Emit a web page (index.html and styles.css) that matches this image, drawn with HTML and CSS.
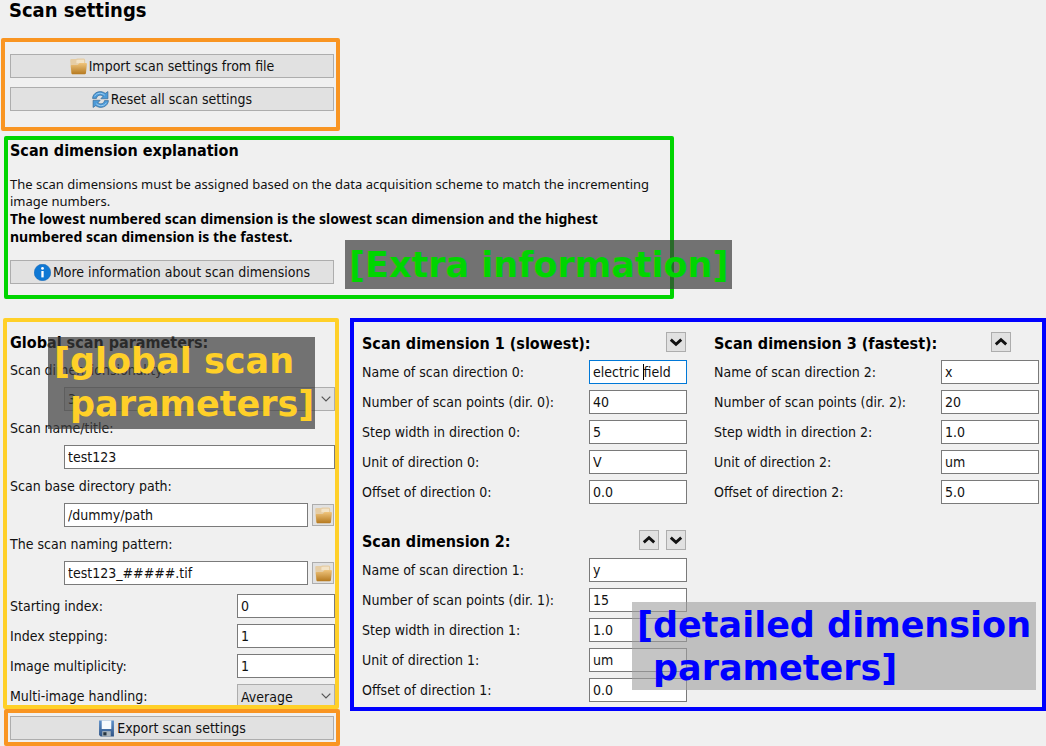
FILE: index.html
```html
<!DOCTYPE html>
<html lang="en">
<head>
<meta charset="utf-8">
<title>Scan settings</title>
<link rel="stylesheet" href="styles.css">
</head>
<body>
<svg class="defs" aria-hidden="true">
  <defs>
    <linearGradient id="folderFront" x1="0" y1="0" x2="0" y2="1"><stop offset="0" stop-color="#efc47c"/><stop offset="1" stop-color="#b5791f"/></linearGradient>
    <linearGradient id="floppy" x1="0" y1="0" x2="0" y2="1"><stop offset="0" stop-color="#5d8fc9"/><stop offset="1" stop-color="#2f5487"/></linearGradient>
    <symbol id="folder" viewBox="0 0 16 16">
      <path d="M0.200 2 Q0.200 1 1.200 1 H5.500 L7 0.500 H13 Q14.300 0.500 14.300 2 V9 L2 15.500 L1 14 Z" fill="#e6cda4"/>
      <path d="M6 2.200 L7.500 1.700 H13.200 V5 H6 Z" fill="#f3e3c6"/>
      <path d="M0.700 7.300 Q0.700 6.500 1.500 6.500 H7.300 L9 4.800 H15.200 Q16 4.800 15.900 5.800 L15 14.300 Q14.800 15.300 13.800 15.300 H2.500 Q1.500 15.300 1.400 14.300 Z" fill="url(#folderFront)"/>
    </symbol>
    <symbol id="reset" viewBox="0 0 16 16">
      <path d="M0.500 7 C0.800 1.500 7.500 -1.500 12.500 2.200 L15 0.500 V7.300 H8.300 L10.500 4.800 C7.500 2.900 4.800 4.200 4.200 7 Z" fill="#4b9ad8" stroke="#35658f" stroke-width="0.600"/>
      <path d="M15.500 9 C15.200 14.500 8.500 17.500 3.500 13.800 L1 15.500 V8.700 H7.700 L5.500 11.200 C8.500 13.100 11.200 11.800 11.800 9 Z" fill="#4b9ad8" stroke="#35658f" stroke-width="0.600"/>
      <path d="M2.500 5 C4.200 1.800 8.800 1.200 12 3.900 M13.500 11 C11.800 14.200 7.200 14.800 4 12.100" fill="none" stroke="#9fd0f3" stroke-width="0.900"/>
    </symbol>
    <symbol id="up" viewBox="0 0 19 19"><path d="M4 12 L9.500 7 L15 12" fill="none" stroke="#111" stroke-width="3"/></symbol>
    <symbol id="down" viewBox="0 0 19 19"><path d="M4 7 L9.500 12 L15 7" fill="none" stroke="#111" stroke-width="3"/></symbol>
    <symbol id="chevron" viewBox="0 0 10 6"><path d="M0.700 0.700 L5 5 L9.300 0.700" fill="none" stroke="#555" stroke-width="1.200"/></symbol>
  </defs>
</svg>
<main class="page">
  <h1 class="title">Scan settings</h1>

  <section class="frame frame-top">
    <button class="action" type="button"><svg class="icon"><use href="#folder"/></svg>Import scan settings from file</button>
    <button class="action" type="button"><svg class="icon"><use href="#reset"/></svg>Reset all scan settings</button>
  </section>

  <section class="frame frame-info">
    <h2 class="heading">Scan dimension explanation</h2>
    <p class="explanation">The scan dimensions must be assigned based on the data acquisition scheme to match the incrementing<br>image numbers.<br><strong>The lowest numbered scan dimension is the slowest scan dimension and the highest<br>numbered scan dimension is the fastest.</strong></p>
    <button class="action" type="button"><svg class="icon" viewBox="0 0 16 16"><circle cx="8" cy="8" r="7.800" fill="#0f78d4" stroke="#0b62b3" stroke-width="0.500"/><circle cx="8" cy="4.200" r="1.300" fill="#fff"/><path d="M8 6.600 V12.600" stroke="#fff" stroke-width="2.200"/></svg>More information about scan dimensions</button>
    <div class="tag tag-info">[Extra information]</div>
  </section>

  <div class="columns">
    <div class="left">
      <section class="frame frame-global">
        <h2 class="heading">Global scan parameters:</h2>
        <div class="stacked">
          <label for="dim">Scan dimensionsionality:</label>
          <div class="line"><span class="pick"><select id="dim" class="select"><option>3</option></select><svg class="chevron"><use href="#chevron"/></svg></span></div>
        </div>
        <div class="stacked">
          <label for="title">Scan name/title:</label>
          <div class="line"><input id="title" class="input" value="test123"></div>
        </div>
        <div class="stacked">
          <label for="path">Scan base directory path:</label>
          <div class="line"><input id="path" class="input" value="/dummy/path"><button class="browse" type="button" aria-label="Choose directory"><svg class="icon"><use href="#folder"/></svg></button></div>
        </div>
        <div class="stacked">
          <label for="pattern">The scan naming pattern:</label>
          <div class="line"><input id="pattern" class="input" value="test123_#####.tif"><button class="browse" type="button" aria-label="Choose file"><svg class="icon"><use href="#folder"/></svg></button></div>
        </div>
        <div class="rows">
          <div class="row"><label for="start">Starting index:</label><input id="start" class="input" value="0"></div>
          <div class="row"><label for="step">Index stepping:</label><input id="step" class="input" value="1"></div>
          <div class="row"><label for="mult">Image multiplicity:</label><input id="mult" class="input" value="1"></div>
          <div class="row row-cut"><label for="multi">Multi-image handling:</label><span class="pick"><select id="multi" class="select"><option>Average</option></select><svg class="chevron"><use href="#chevron"/></svg></span></div>
        </div>
        <div class="tag tag-global">[global scan<br><span class="tag-next">parameters]</span></div>
      </section>
      <section class="frame frame-export">
        <button class="action" type="button"><svg class="icon" viewBox="0 0 16 16"><path d="M1 0.500 H15 V15.500 H2.500 L1 14 Z" fill="url(#floppy)"/><path d="M3.500 0.500 H12.500 V8.500 H3.500 Z" fill="#f7fafd"/><path d="M4 10.500 H12 V15.500 H4 Z" fill="#a9b4bd"/><path d="M5 11.500 H8 V14.500 H5 Z" fill="#26343f"/></svg>Export scan settings</button>
      </section>
    </div>

    <section class="frame frame-dims">
      <div class="group">
        <div class="group-head"><h2 class="heading">Scan dimension 1 (slowest):</h2><button class="move" type="button" aria-label="Move down"><svg><use href="#down"/></svg></button></div>
        <div class="rows">
          <div class="row"><label for="n0">Name of scan direction 0:</label><span class="pick"><input id="n0" class="input active" value="electric field"><span class="caret"></span></span></div>
          <div class="row"><label for="p0">Number of scan points (dir. 0):</label><input id="p0" class="input" value="40"></div>
          <div class="row"><label for="s0">Step width in direction 0:</label><input id="s0" class="input" value="5"></div>
          <div class="row"><label for="u0">Unit of direction 0:</label><input id="u0" class="input" value="V"></div>
          <div class="row"><label for="o0">Offset of direction 0:</label><input id="o0" class="input" value="0.0"></div>
        </div>
      </div>
      <div class="group">
        <div class="group-head group-head-last"><h2 class="heading">Scan dimension 3 (fastest):</h2><button class="move" type="button" aria-label="Move up"><svg><use href="#up"/></svg></button></div>
        <div class="rows">
          <div class="row"><label for="n2">Name of scan direction 2:</label><input id="n2" class="input" value="x"></div>
          <div class="row"><label for="p2">Number of scan points (dir. 2):</label><input id="p2" class="input" value="20"></div>
          <div class="row"><label for="s2">Step width in direction 2:</label><input id="s2" class="input" value="1.0"></div>
          <div class="row"><label for="u2">Unit of direction 2:</label><input id="u2" class="input" value="um"></div>
          <div class="row"><label for="o2">Offset of direction 2:</label><input id="o2" class="input" value="5.0"></div>
        </div>
      </div>
      <div class="group">
        <div class="group-head"><h2 class="heading">Scan dimension 2:</h2><button class="move" type="button" aria-label="Move up"><svg><use href="#up"/></svg></button><button class="move" type="button" aria-label="Move down"><svg><use href="#down"/></svg></button></div>
        <div class="rows">
          <div class="row"><label for="n1">Name of scan direction 1:</label><input id="n1" class="input" value="y"></div>
          <div class="row"><label for="p1">Number of scan points (dir. 1):</label><input id="p1" class="input" value="15"></div>
          <div class="row"><label for="s1">Step width in direction 1:</label><input id="s1" class="input" value="1.0"></div>
          <div class="row"><label for="u1">Unit of direction 1:</label><input id="u1" class="input" value="um"></div>
          <div class="row"><label for="o1">Offset of direction 1:</label><input id="o1" class="input" value="0.0"></div>
        </div>
      </div>
      <div class="tag tag-dims">[detailed dimension<br><span class="tag-next">parameters]</span></div>
    </section>
  </div>
</main>
</body>
</html>
```
FILE: styles.css
```css
* { box-sizing: border-box; }

body {
  margin: 0;
  background: #f0f0f0;
  color: #111;
  font: 14px/17px "DejaVu Sans Condensed", "DejaVu Sans", sans-serif;
  font-stretch: condensed;
}

button, input, select { font: inherit; color: inherit; margin: 0; }
.defs { position: absolute; width: 0; height: 0; }

.title {
  margin: 0;
  padding-left: 9px;
  font-size: 20px;
  line-height: 20px;
  color: #000;
}

.heading {
  margin: 0;
  font-size: 16px;
  line-height: 20px;
  color: #000;
  white-space: nowrap;
}

.frame { position: relative; border: 4px solid; border-radius: 2px; }
.icon { width: 17px; height: 17px; flex: none; }

.action {
  display: flex;
  align-items: center;
  justify-content: center;
  gap: 2px;
  width: 324px;
  max-width: 100%;
  height: 24px;
  padding: 0;
  border: 1px solid #adadad;
  background: #e1e1e1;
}

.frame-top {
  display: flex;
  flex-direction: column;
  gap: 9px;
  width: 339px;
  margin: 18px 0 0 1px;
  padding: 12px 0 16px 5px;
  border-color: #f99522;
}

.frame-info {
  width: 670px;
  margin: 5px 0 0 4px;
  padding: 1px 0 11px 2px;
  border-color: #00d500;
}

.explanation {
  margin: 15px 0 14px;
  font-family: "Noto Sans", sans-serif;
  font-size: 13px;
  font-stretch: normal;
  white-space: nowrap;
}

.explanation strong { font-size: 14px; color: #000; }

.columns {
  display: grid;
  grid-template-columns: minmax(0, 337fr) minmax(0, 696fr);
  column-gap: 10px;
  align-items: start;
  margin: 19px 0 0 3px;
}

.frame-global {
  margin-right: 1px;
  padding: 11px 0 0 3px;
  border-color: #ffd028;
}

.frame-global > .heading { margin-bottom: 9px; }

.stacked {
  display: flex;
  flex-direction: column;
  gap: 8px;
  margin-bottom: 9px;
}

.line { display: flex; gap: 4px; padding-left: 54px; }
.line .input, .line .pick { flex: 1; min-width: 0; }

.input, .select {
  display: block;
  width: 100%;
  height: 24px;
  padding: 0 3px;
  border: 1px solid #7a7a7a;
  border-radius: 0;
  outline: 0;
  background: #fff;
}

.active { border-color: #0078d7; }

.select {
  appearance: none;
  border-color: #adadad;
  background: #e1e1e1;
}

.pick { position: relative; display: block; }
.chevron { position: absolute; right: 4px; top: 9px; width: 10px; height: 6px; }
.caret { position: absolute; left: 54px; top: 4px; width: 1px; height: 16px; background: #000; }

.browse, .move {
  display: flex;
  align-items: center;
  justify-content: center;
  flex: none;
  padding: 0;
  border: 1px solid #adadad;
  background: #e1e1e1;
}

.browse { width: 22px; height: 22px; margin: 1px 1px 1px 0; }
.move { width: 20px; height: 20px; }
.move svg { width: 18px; height: 18px; flex: none; }

.rows { display: grid; gap: 6px; }

.row {
  display: grid;
  grid-template-columns: minmax(0, 1fr) 98px;
  align-items: center;
  height: 24px;
}

.row-cut { height: 21px; align-items: start; line-height: 24px; overflow: hidden; }

.frame-export {
  margin-left: 1px;
  padding: 3px 2px 2px;
  border-color: #f99522;
}

.frame-dims {
  display: grid;
  grid-template-columns: repeat(2, minmax(0, 1fr));
  gap: 26px 27px;
  padding: 10px 3px 5px 8px;
  border-color: #0000ff;
  border-radius: 0;
}

.group-head {
  display: flex;
  align-items: start;
  gap: 7px;
  height: 28px;
  padding-right: 1px;
}

.group-head .heading { flex: 1; line-height: 24px; }
.group-head-last { padding-right: 28px; }

.tag {
  position: absolute;
  font: bold 35px/43px "DejaVu Sans", sans-serif;
  white-space: nowrap;
  background: rgba(60, 60, 60, 0.7);
}

.tag-next { padding-left: 16px; }
.tag-info { left: 337px; top: 100px; padding: 4px 3px 2px 4px; color: #00d500; }
.tag-global { left: 41px; top: 15px; padding: 3px 1px 3px 6px; color: #ffd028; }
.tag-dims { right: 6px; bottom: 17px; width: 404px; padding: 2px 5px 0; color: #0000ff; background: rgba(158, 158, 158, 0.6); }
```
